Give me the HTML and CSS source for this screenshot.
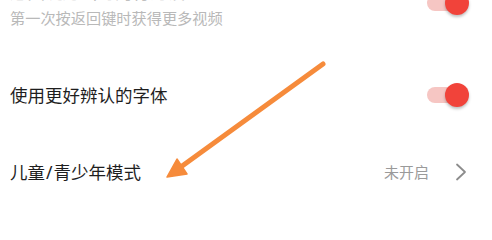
FILE: index.html
```html
<!DOCTYPE html>
<html lang="zh-CN">
<head>
<meta charset="utf-8">
<link rel="stylesheet" href="styles.css">
</head>
<body>
<div class="page">
  <div class="row row-first">
    <div class="text">
      <div class="title">返回键退出时的行为设置</div>
      <div class="sub">第一次按返回键时获得更多视频</div>
    </div>
    <div class="toggle"><span class="track"></span><span class="knob"></span></div>
  </div>
  <div class="row">
    <div class="text">
      <div class="title">使用更好辨认的字体</div>
    </div>
    <div class="toggle"><span class="track"></span><span class="knob"></span></div>
  </div>
  <div class="row">
    <div class="text">
      <div class="title">儿童<span class="slash">/</span>青少年模式</div>
    </div>
    <div class="value">
      <span class="state">未开启</span>
      <svg class="chev" width="12" height="18" viewBox="0 0 12 18"><path d="M2 1.5 L10 9 L2 16.5" fill="none" stroke="#8c8c8c" stroke-width="1.8" stroke-linecap="round" stroke-linejoin="round"/></svg>
    </div>
  </div>
  <svg class="arrow" width="492" height="206" viewBox="0 0 492 206">
    <line x1="323" y1="64" x2="178" y2="169" stroke="#f68b3b" stroke-width="5" stroke-linecap="round"/>
    <polygon points="167,177 187,174 177,159" fill="#f68b3b" stroke="#f68b3b" stroke-width="1.5" stroke-linejoin="round"/>
  </svg>
</div>
</body>
</html>
```
FILE: styles.css
```css
html, body {
  margin: 0;
  padding: 0;
  background: #ffffff;
}
body {
  width: 492px;
  height: 206px;
  overflow: hidden;
  font-family: "Noto Sans CJK SC", "Noto Sans", sans-serif;
}
.page {
  position: relative;
  width: 492px;
  height: 206px;
  overflow: hidden;
}
.row {
  display: flex;
  align-items: center;
  justify-content: space-between;
  height: 77px;
  padding: 0 23px 0 10px;
}
.row-first {
  height: 106px;
  margin-top: -50px;
}
.title {
  font-size: 17.5px;
  line-height: 26px;
  color: #1e1e1e;
}
.slash {
  font-family: "Noto Sans", "Liberation Sans", sans-serif;
  margin: 0 1px;
}
.row-first .title {
  color: #c0c0c0;
}
.sub {
  margin-top: 2px;
  font-size: 15.2px;
  line-height: 20px;
  color: #b9b9b9;
}
.toggle {
  position: relative;
  width: 42px;
  height: 24px;
  display: flex;
  align-items: center;
}
.track {
  width: 34px;
  height: 16px;
  border-radius: 8px;
  background: #f6c6c3;
}
.knob {
  position: absolute;
  right: 0;
  top: 0;
  width: 24px;
  height: 24px;
  border-radius: 50%;
  background: #f1433a;
  box-shadow: 0 2px 3px rgba(0, 0, 0, 0.25);
}
.value {
  display: flex;
  align-items: center;
  gap: 26px;
  margin-right: 2px;
}
.state {
  font-size: 15px;
  line-height: 20px;
  color: #9a9a9a;
}
.chev {
  display: block;
}
.arrow {
  position: absolute;
  left: 0;
  top: 0;
  pointer-events: none;
}
```
